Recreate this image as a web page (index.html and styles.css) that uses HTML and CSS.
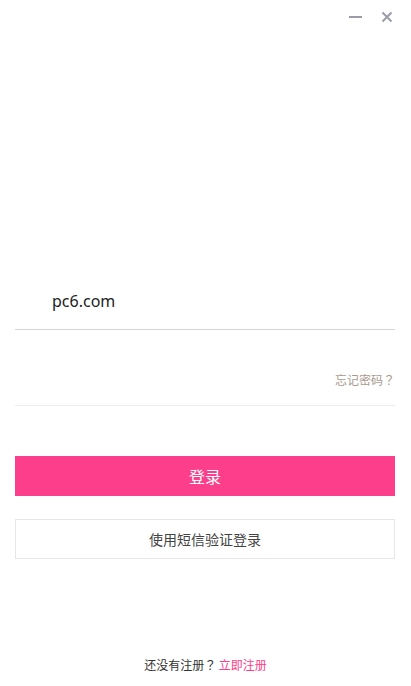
FILE: index.html
```html
<!DOCTYPE html>
<html lang="zh-CN">
<head>
  <meta charset="UTF-8" />
  <meta name="viewport" content="width=device-width, initial-scale=1.0"/>
  <title>登录</title>
  <link rel="stylesheet" href="styles.css">
</head>
<body>
  <div class="topbar">
    <span class="btn-min"></span>
    <svg class="btn-close" width="12" height="12" viewBox="0 0 12 12">
      <path d="M1.5 1.5 L10.5 10.5 M10.5 1.5 L1.5 10.5" stroke="#9a9ca8" stroke-width="2" fill="none"/>
    </svg>
  </div>

  <div class="container">
    <div class="campo campo-usuario">
      <input type="text" value="pc6.com" />
    </div>

    <div class="campo campo-clave">
      <input type="password" />
      <a href="#" class="olvido">忘记密码<span class="interroga" lang="ja">？</span></a>
    </div>

    <button class="btn">登录</button>
    <button class="btn-sms">使用短信验证登录</button>
  </div>

  <div class="registro">
    还没有注册<span class="interroga" lang="ja">？</span> <a href="#">立即注册</a>
  </div>
</body>
</html>
```

FILE: styles.css
```css
body {
  margin: 0;
  width: 411px;
  height: 686px;
  background: #fff;
  font-family: "Noto Sans", "Noto Sans CJK SC", sans-serif;
  display: flex;
  flex-direction: column;
  overflow: hidden;
}
.topbar {
  height: 30px;
  display: flex;
  justify-content: flex-end;
  align-items: center;
  gap: 19px;
  padding: 2px 18px 0 0;
}
.btn-min {
  width: 13px;
  height: 2px;
  background: #9a9ca8;
}
.btn-close {
  display: block;
}
.container {
  padding: 0 16px 0 15px;
  display: flex;
  flex-direction: column;
}
.campo {
  display: flex;
  align-items: center;
  height: 48px;
}
.campo input {
  flex: 1;
  border: none;
  outline: none;
  background: transparent;
  font-family: "Noto Sans", "Noto Sans CJK SC", sans-serif;
  font-size: 16px;
  color: #222;
  padding: 0 0 0 37px;
  height: 40px;
}
.campo-usuario {
  margin-top: 249px;
  border-bottom: 1px solid #d6d6d6;
  align-items: flex-start;
}
.campo-clave {
  margin-top: 27px;
  border-bottom: 1px solid #ececec;
}
.olvido {
  font-size: 12px;
  color: #a99a8e;
  text-decoration: none;
  padding-bottom: 4px;
  font-family: "Noto Sans CJK SC", sans-serif;
}
.interroga {
  font-family: "Noto Sans CJK JP", sans-serif;
}
.btn {
  margin-top: 50px;
  height: 40px;
  border: none;
  background: #fd3e8a;
  color: #fff;
  font-size: 16px;
  font-family: "Noto Sans CJK SC", sans-serif;
  padding: 0;
}
.btn-sms {
  margin-top: 23px;
  height: 40px;
  border: 1px solid #e6e6e6;
  background: #fff;
  color: #444;
  font-size: 14px;
  font-family: "Noto Sans CJK SC", sans-serif;
  padding: 0;
}
.registro {
  margin-top: auto;
  padding-bottom: 13px;
  text-align: center;
  font-size: 12px;
  color: #333;
  font-family: "Noto Sans CJK SC", sans-serif;
}
.registro a {
  color: #fd3e8a;
  text-decoration: none;
}
```
